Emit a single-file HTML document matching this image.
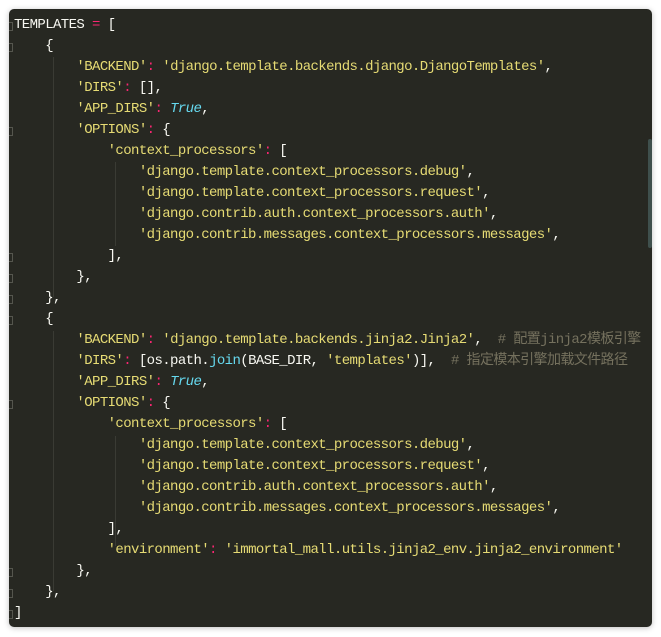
<!DOCTYPE html>
<html><head><meta charset="utf-8"><style>
html,body{margin:0;padding:0;background:#fff;width:661px;height:637px;overflow:hidden}
.p{position:absolute;left:9px;top:9px;width:643px;height:618px;background:#272822;border-radius:5px;box-shadow:0 1px 6px rgba(0,0,0,.25);overflow:hidden}
pre{margin:0;position:absolute;left:5px;top:6px;font:14px/21px "Liberation Mono","Noto Sans CJK SC",monospace;letter-spacing:-0.6px;color:#f8f8f2;white-space:pre}
.s{color:#e6db74}.k{color:#f92672}.b{color:#66d9ef;font-style:italic}.c{color:#75715e}.f{color:#66d9ef}
.sb{position:absolute;left:639px;top:130px;width:4px;height:109px;background:#3f504d;border-radius:2px}
.g{position:absolute;width:1px;background:#3a3b34}
.m{position:absolute;left:0;width:3px;height:7px;border:1px solid #55564e;border-left:none}
</style></head><body><div class="p">
<div class="g" style="left:44px;top:48px;height:240px"></div>
<div class="g" style="left:44px;top:322px;height:260px"></div>
<div class="g" style="left:106px;top:153px;height:84px"></div>
<div class="g" style="left:106px;top:427px;height:110px"></div>
<div class="m" style="top:13px"></div><div class="m" style="top:34px"></div><div class="m" style="top:118px"></div>
<div class="m" style="top:244px"></div><div class="m" style="top:265px"></div><div class="m" style="top:286px"></div>
<div class="m" style="top:307px"></div><div class="m" style="top:391px"></div><div class="m" style="top:559px"></div>
<div class="m" style="top:580px"></div><div class="m" style="top:601px"></div>
<pre>TEMPLATES <span class="k">=</span> [
    {
        <span class="s">'BACKEND'</span><span class="k">:</span> <span class="s">'django.template.backends.django.DjangoTemplates'</span>,
        <span class="s">'DIRS'</span><span class="k">:</span> [],
        <span class="s">'APP_DIRS'</span><span class="k">:</span> <span class="b">True</span>,
        <span class="s">'OPTIONS'</span><span class="k">:</span> {
            <span class="s">'context_processors'</span><span class="k">:</span> [
                <span class="s">'django.template.context_processors.debug'</span>,
                <span class="s">'django.template.context_processors.request'</span>,
                <span class="s">'django.contrib.auth.context_processors.auth'</span>,
                <span class="s">'django.contrib.messages.context_processors.messages'</span>,
            ],
        },
    },
    {
        <span class="s">'BACKEND'</span><span class="k">:</span> <span class="s">'django.template.backends.jinja2.Jinja2'</span>,  <span class="c"># 配置jinja2模板引擎</span>
        <span class="s">'DIRS'</span><span class="k">:</span> [os.path.<span class="f">join</span>(BASE_DIR, <span class="s">'templates'</span>)],  <span class="c"># 指定模本引擎加载文件路径</span>
        <span class="s">'APP_DIRS'</span><span class="k">:</span> <span class="b">True</span>,
        <span class="s">'OPTIONS'</span><span class="k">:</span> {
            <span class="s">'context_processors'</span><span class="k">:</span> [
                <span class="s">'django.template.context_processors.debug'</span>,
                <span class="s">'django.template.context_processors.request'</span>,
                <span class="s">'django.contrib.auth.context_processors.auth'</span>,
                <span class="s">'django.contrib.messages.context_processors.messages'</span>,
            ],
            <span class="s">'environment'</span><span class="k">:</span> <span class="s">'immortal_mall.utils.jinja2_env.jinja2_environment'</span>
        },
    },
]</pre>
<div class="sb"></div>
</div></body></html>
